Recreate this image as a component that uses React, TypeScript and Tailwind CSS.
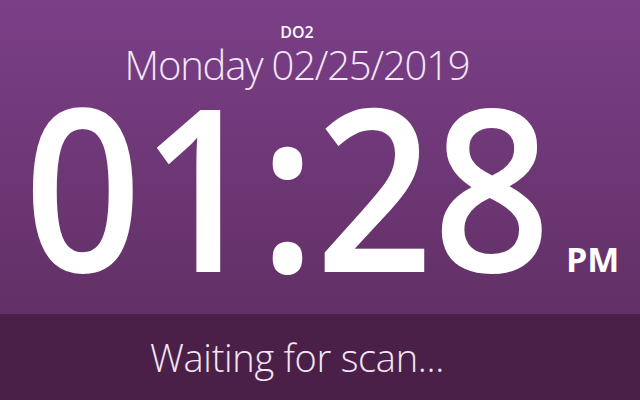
export default function App() {
  return (
    <div
      className="w-[640px] h-[400px] flex flex-col overflow-hidden text-white"
      style={{ fontFamily: '"Open Sans", "Noto Sans", sans-serif' }}
    >
      <div className="flex-1 flex flex-col bg-gradient-to-b from-[#7b3f88] to-[#623066]">
        <div className="pr-[46px] pt-[24px] flex flex-col items-center">
          <div className="text-[16px] font-semibold leading-[16px]">DO2</div>
          <div className="text-[40px] font-light leading-[50px] text-[#f3e6f5] tracking-[-1.2px]">
            Monday 02/25/2019
          </div>
        </div>
        <div className="flex items-baseline pl-[24px] mt-[-6px]">
          <div className="w-[526px] whitespace-nowrap text-[226px] font-semibold leading-[200px]">
            <span className="inline-block origin-left scale-x-[0.91]">01:28</span>
          </div>
          <div className="text-[34px] font-bold leading-[34px] ml-[16px]">PM</div>
        </div>
      </div>
      <div className="h-[86px] bg-[#4a2049] flex items-center justify-center pr-[46px]">
        <div className="text-[38px] font-light text-[#f3e6f5] tracking-[-0.3px]">Waiting for scan...</div>
      </div>
    </div>
  );
}
